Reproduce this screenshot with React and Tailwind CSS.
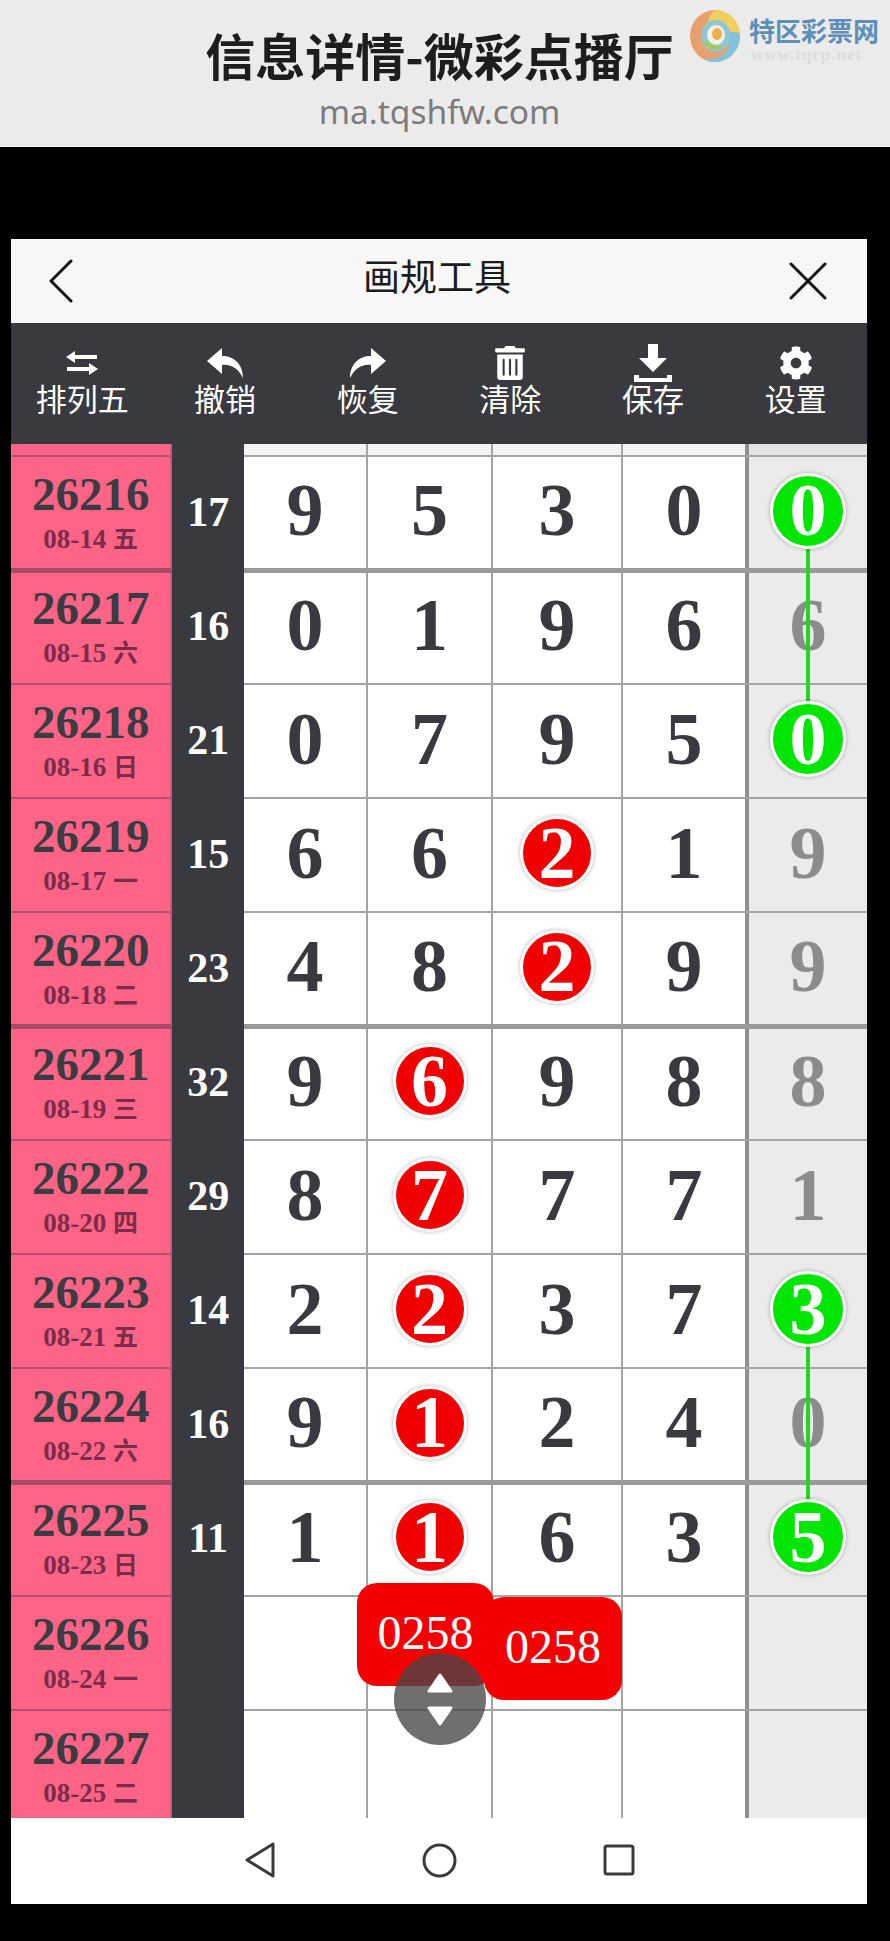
import React from 'react';
import { FaTrashAlt, FaCog } from 'react-icons/fa';

const serif = "font-['Liberation_Serif','Noto_Sans_CJK_SC',serif]";

const rows = [
    { no: '26216', date: '08-14', day: '五', sum: 17, nums: [9, 5, 3, 0, 0], red: -1, green: true, line: 229, thick: true },
    { no: '26217', date: '08-15', day: '六', sum: 16, nums: [0, 1, 9, 6, 6], red: -1 },
    { no: '26218', date: '08-16', day: '日', sum: 21, nums: [0, 7, 9, 5, 0], red: -1, green: true },
    { no: '26219', date: '08-17', day: '一', sum: 15, nums: [6, 6, 2, 1, 9], red: 2 },
    { no: '26220', date: '08-18', day: '二', sum: 23, nums: [4, 8, 2, 9, 9], red: 2, thick: true },
    { no: '26221', date: '08-19', day: '三', sum: 32, nums: [9, 6, 9, 8, 8], red: 1 },
    { no: '26222', date: '08-20', day: '四', sum: 29, nums: [8, 7, 7, 7, 1], red: 1 },
    { no: '26223', date: '08-21', day: '五', sum: 14, nums: [2, 2, 3, 7, 3], red: 1, green: true, line: 229 },
    { no: '26224', date: '08-22', day: '六', sum: 16, nums: [9, 1, 2, 4, 0], red: 1, thick: true },
    { no: '26225', date: '08-23', day: '日', sum: 11, nums: [1, 1, 6, 3, 5], red: 1, green: true },
    { no: '26226', date: '08-24', day: '一', sum: '', nums: [] },
    { no: '26227', date: '08-25', day: '二', sum: '', nums: [] },
];

const colWidths = ['w-[124px]', 'w-[125px]', 'w-[130px]', 'w-[126px]', 'w-[118px]'];

const Logo = () => (
    <div className="absolute left-[689px] top-[9px] flex items-start gap-[8px]">
        <svg width="52" height="54" viewBox="0 0 52 54" fill="none">
            <ellipse cx="26" cy="27" rx="25" ry="26" fill="#e9a06f" />
            <path d="M26 1a25 26 0 0 1 25 26c0 10-6 19-14 23 5-8 6-20-1-29C31 14 24 13 18 15c2-7 5-12 8-14z" fill="#f0cf5e" />
            <path d="M51 27c0 14-11 26-25 26-6 0-10-2-13-4 9 3 21 0 26-9 3-6 3-12 0-17 7 0 11-1 12 4z" fill="#7fc3dc" />
            <ellipse cx="27" cy="27" rx="15" ry="16" fill="#8ec6d6" />
            <path d="M14 33c4 8 15 10 22 4-6 1-12 0-16-4z" fill="#a6c95a" />
            <ellipse cx="27" cy="26" rx="9" ry="10" fill="#f3f0e4" />
            <ellipse cx="28" cy="25" rx="5" ry="6" fill="#eab04f" />
        </svg>
        <div className="flex flex-col items-start pt-[5px]">
            <span className="font-['Noto_Sans_CJK_SC',sans-serif] font-bold text-[26px] leading-[32px] text-[#5d8fb8] whitespace-nowrap">特区彩票网</span>
            <span className={`${serif} font-bold text-[17px] leading-[18px] tracking-[1px] text-[#dcdcdc] whitespace-nowrap pl-[2px]`}>www.tqcp.net</span>
        </div>
    </div>
);

const Header = () => (
    <div className="relative h-[147px] bg-[#ebebeb] border-b border-[#f6f6f6] flex flex-col items-center pr-[11px]">
        <div className="mt-[21px] font-['Noto_Sans_CJK_SC',sans-serif] font-bold text-[50px] leading-[66px] text-[#1d1d1d] whitespace-nowrap">信息详情-微彩点播厅</div>
        <div className="mt-[2px] font-['Noto_Sans',sans-serif] text-[33.5px] leading-[44px] text-[#7c7c7c]">ma.tqshfw.com</div>
        <Logo />
    </div>
);

const TitleBar = () => (
    <div className="h-[84px] bg-[#f7f7f7] flex items-center justify-between pl-[38px] pr-[40px]">
        <svg width="24" height="44" viewBox="0 0 24 44" fill="none" stroke="#111" strokeWidth="3" strokeLinecap="round" strokeLinejoin="round">
            <path d="M22 2 2 22l20 20" />
        </svg>
        <div className="font-['Noto_Sans_CJK_SC',sans-serif] text-[37px] leading-[44px] text-[#1a1a1a] -mt-[12px] ml-[12px]">画规工具</div>
        <svg width="38" height="38" viewBox="0 0 38 38" fill="none" stroke="#111" strokeWidth="3" strokeLinecap="round">
            <path d="M2 2l34 34M36 2 2 36" />
        </svg>
    </div>
);

const ExchangeIcon = () => (
    <svg width="32" height="24" viewBox="0 0 32 24" fill="white">
        <path d="M9 0v4h22v4H9v4L0 6zM23 12v4H1v4h22v4l9-6z" />
    </svg>
);

const UndoIcon = () => (
    <svg width="36" height="30" viewBox="0 0 36 30" fill="white">
        <path d="M15 0 0 13l15 13v-9c10-1 16 4 21 13C36 16 27 8 15 8z" />
    </svg>
);

const RedoIcon = () => (
    <svg width="36" height="30" viewBox="0 0 36 30" fill="white">
        <path d="M21 0l15 13-15 13v-9C11 16 5 21 0 30 0 16 9 8 21 8z" />
    </svg>
);

const DownloadIcon = () => (
    <svg width="38" height="38" viewBox="0 0 38 38" fill="white">
        <path d="M14 0h10v14h9L19 28 5 14h9zM0 31h5v3h28v-3h5v7H0z" />
    </svg>
);

const tools = [
    { label: '排列五', icon: <ExchangeIcon /> },
    { label: '撤销', icon: <UndoIcon /> },
    { label: '恢复', icon: <RedoIcon /> },
    { label: '清除', icon: <FaTrashAlt size={34} /> },
    { label: '保存', icon: <DownloadIcon /> },
    { label: '设置', icon: <FaCog size={34} /> },
];

const Toolbar = () => (
    <div className="h-[121px] bg-[#393940] flex pt-[21px]">
        {tools.map((tool) => (
            <div key={tool.label} className="flex-1 flex flex-col items-center text-white">
                <div className="h-[38px] flex items-center justify-center">{tool.icon}</div>
                <div className="font-['Noto_Sans_CJK_SC',sans-serif] text-[31px] leading-[36px] -mt-[2px] whitespace-nowrap">{tool.label}</div>
            </div>
        ))}
    </div>
);

const Ball = ({ value, green }) => (
    <div className={`relative z-10 rounded-full border-[3px] border-white shadow-[0_0_4px_rgba(0,0,0,0.3)] flex items-center justify-center text-white ${green ? 'w-[76px] h-[76px] bg-[#00e600]' : 'w-[74px] h-[74px] bg-[#f00000]'}`}>
        {value}
    </div>
);

const Row = ({ row }) => {
    const gridBorder = row.thick ? 'border-b-[3px] border-[#9a9a9a] shadow-[0_2px_0_#9a9a9a]' : 'border-b-2 border-[#a4a4a4]';
    const pinkBorder = row.thick ? 'border-b-[3px] border-b-[#a94a68] shadow-[0_2px_0_#a94a68]' : 'border-b-2 border-b-[#b84e6e]';
    return (
        <div className={`flex h-[114px] shrink-0 ${row.thick ? 'relative z-[1]' : ''}`}>
            <div className={`w-[162px] flex flex-col items-center bg-[#ff6487] border-r-2 border-r-[#c95a78] ${pinkBorder} ${serif}`}>
                <div className="mt-[15px] text-[47px] leading-[44px] font-bold text-[#3b3b42]">{row.no}</div>
                <div className="mt-[5px] text-[27px] leading-[32px] font-bold text-[#7a2c4a] whitespace-nowrap">{row.date} <span className="font-['Noto_Sans_CJK_SC',sans-serif] text-[25px]">{row.day}</span></div>
            </div>
            <div className={`w-[72px] bg-[#393940] flex items-center justify-center text-white font-bold text-[42px] pb-[3px] ${serif}`}>{row.sum}</div>
            <div className={`flex flex-1 bg-white ${gridBorder}`}>
                {colWidths.map((width, i) => {
                    const isLast = i === 4;
                    const value = row.nums[i];
                    const showBall = (i === row.red) || (isLast && row.green);
                    return (
                        <div
                            key={width}
                            className={`relative flex items-center justify-center font-bold text-[74px] pb-[4px] ${serif} ${width} ${isLast ? 'bg-[#ebebeb] text-[#8c8c8e]' : 'text-[#393940]'} ${i === 3 ? 'border-r-[4px] border-[#909090]' : isLast ? '' : 'border-r-2 border-[#a4a4a4]'}`}
                        >
                            {showBall ? <Ball value={value} green={isLast} /> : value}
                            {isLast && row.line && (
                                <div className="absolute left-[57px] top-[55px] w-[4px] bg-[#22d622] z-[5]" style={{ height: row.line }} />
                            )}
                        </div>
                    );
                })}
            </div>
        </div>
    );
};

const TopStrip = () => (
    <div className="flex h-[13px] shrink-0">
        <div className="w-[162px] bg-[#ff6487] border-r-2 border-r-[#c95a78] border-b-2 border-b-[#b84e6e]" />
        <div className="w-[72px] bg-[#393940]" />
        <div className="flex flex-1 bg-[#f4f4f6] border-b-2 border-[#a4a4a4]">
            {colWidths.map((width, i) => (
                <div
                    key={width}
                    className={`${width} ${i === 4 ? 'bg-[#e4e4e4]' : ''} ${i === 3 ? 'border-r-[4px] border-[#909090]' : i === 4 ? '' : 'border-r-2 border-[#a4a4a4]'}`}
                />
            ))}
        </div>
    </div>
);

const Callout = ({ className }) => (
    <div className={`absolute h-[103px] rounded-[20px] bg-[#f50000] flex items-center justify-center text-white text-[48px] pb-[4px] ${serif} ${className}`}>0258</div>
);

const ScrollButton = () => (
    <div className="absolute left-[383px] top-[1209px] z-30 w-[92px] h-[92px] rounded-full bg-[rgba(70,70,70,0.78)] flex flex-col items-center justify-center gap-[13px]">
        <svg width="28" height="21" viewBox="0 0 28 21" fill="white" stroke="white" strokeWidth="3" strokeLinejoin="round">
            <path d="M14 3 25 19H3z" />
        </svg>
        <svg width="28" height="20" viewBox="0 0 28 20" fill="white" stroke="white" strokeWidth="3" strokeLinejoin="round">
            <path d="M3 2h22L14 18z" />
        </svg>
    </div>
);

const Board = () => (
    <div className="relative h-[1374px] overflow-hidden flex flex-col">
        <TopStrip />
        {rows.map((row) => (
            <Row key={row.no} row={row} />
        ))}
        <Callout className="left-[346px] top-[1139px] w-[137px] z-20" />
        <Callout className="left-[473px] top-[1153px] w-[138px] z-20" />
        <ScrollButton />
    </div>
);

const NavBar = () => (
    <div className="h-[86px] bg-white flex items-center justify-center gap-[146px] pb-[2px]">
        <svg width="32" height="36" viewBox="0 0 32 36" fill="none" stroke="#3a3a3a" strokeWidth="3" strokeLinejoin="round">
            <path d="M29 2v32L3 18z" />
        </svg>
        <svg width="35" height="35" viewBox="0 0 35 35" fill="none" stroke="#3a3a3a" strokeWidth="3">
            <circle cx="17.5" cy="17.5" r="15.5" />
        </svg>
        <svg width="32" height="32" viewBox="0 0 32 32" fill="none" stroke="#3a3a3a" strokeWidth="3" strokeLinejoin="round">
            <rect x="2" y="2" width="28" height="28" rx="2" />
        </svg>
    </div>
);

const App = () => {
    return (
        <div className="w-[890px] h-[1941px] bg-black overflow-hidden">
            <Header />
            <div className="mt-[92px] ml-[11px] w-[856px] flex flex-col">
                <TitleBar />
                <Toolbar />
                <Board />
                <NavBar />
            </div>
        </div>
    );
};

export default App;
